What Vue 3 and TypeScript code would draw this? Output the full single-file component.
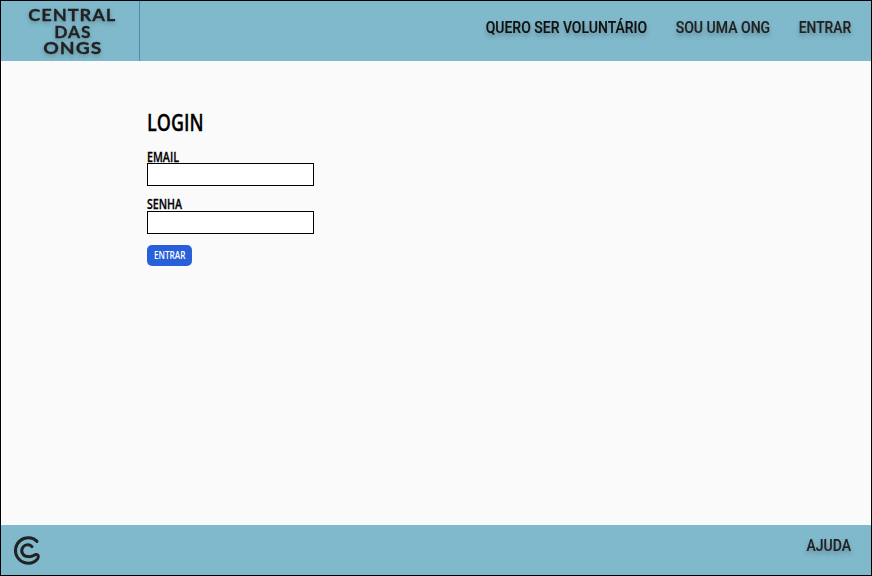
<script setup lang="ts">
interface Label {
  text: string
  width: number
}

const brand: Label[] = [
  { text: 'CENTRAL', width: 88 },
  { text: 'DAS', width: 37 },
  { text: 'ONGS', width: 59 },
]

const links: Label[] = [
  { text: 'QUERO SER VOLUNTÁRIO', width: 162 },
  { text: 'SOU UMA ONG', width: 95 },
  { text: 'ENTRAR', width: 53 },
]

const fields = [
  { id: 'email', text: 'EMAIL', type: 'email', width: 32 },
  { id: 'senha', text: 'SENHA', type: 'password', width: 35 },
]
</script>

<template>
  <div class="page">
    <header class="header">
      <a class="brand">
        <svg v-for="line in brand" :key="line.text" class="brand-line" :width="line.width" height="16.7">
          <text x="0.3" y="15" :textLength="line.width" lengthAdjust="spacingAndGlyphs">{{ line.text }}</text>
        </svg>
      </a>
      <nav class="nav">
        <a v-for="(link, i) in links" :key="link.text" class="link" :class="{ active: i === 0 }">
          <svg :width="link.width" height="20">
            <text x="0.7" y="16" :textLength="link.width - 0.5" lengthAdjust="spacingAndGlyphs">{{ link.text }}</text>
          </svg>
        </a>
      </nav>
    </header>

    <main class="main">
      <h1 class="title">
        <svg width="56" height="30">
          <text x="0" y="24" textLength="56.5" lengthAdjust="spacingAndGlyphs">LOGIN</text>
        </svg>
      </h1>
      <form class="form" @submit.prevent>
        <div v-for="field in fields" :key="field.id" class="field">
          <label :for="field.id">
            <svg :width="field.width" height="14">
              <text x="0" y="13" :textLength="field.width" lengthAdjust="spacingAndGlyphs">{{ field.text }}</text>
            </svg>
          </label>
          <input :id="field.id" :type="field.type" />
        </div>
        <button class="submit" type="submit">
          <svg width="32" height="13">
            <text x="0" y="10" textLength="31.5" lengthAdjust="spacingAndGlyphs">ENTRAR</text>
          </svg>
        </button>
      </form>
    </main>

    <footer class="footer">
      <svg class="mark" width="30" height="30" viewBox="0 0 30 30">
        <path d="M24 6.4A12.7 12.7 0 1 0 21 26.8C24.3 25 26 22.3 25.2 20.6C24.3 18.8 22.4 19.3 21 20.3C18.5 22 16.5 21.6 14.7 21.6A5.9 5.9 0 1 1 19 11.7" />
      </svg>
      <a class="link">
        <svg width="45" height="20">
          <text x="0.5" y="16" textLength="44.5" lengthAdjust="spacingAndGlyphs">AJUDA</text>
        </svg>
      </a>
    </footer>
  </div>
</template>

<style>
body {
  margin: 0;
}
</style>

<style scoped>
.page {
  box-sizing: border-box;
  width: 872px;
  height: 576px;
  border: 1px solid #000;
  background: #fafafa;
  display: flex;
  flex-direction: column;
  overflow: hidden;
}

svg {
  display: block;
  flex-shrink: 0;
  overflow: visible;
}

.header {
  display: flex;
  justify-content: space-between;
  height: 60px;
  background: #80b9cc;
}

.brand {
  box-sizing: border-box;
  width: 139px;
  padding: 5px 0 0 4px;
  border-right: 1px solid #4e8ca8;
  display: flex;
  flex-direction: column;
  align-items: center;
}

.brand-line {
  font: 700 17.8px Lato, sans-serif;
  letter-spacing: 0.9px;
  fill: #222;
  stroke: #222;
  stroke-width: 0.3px;
  filter: drop-shadow(0 2px 2px rgba(0, 0, 0, 0.25));
}

.nav {
  display: flex;
  gap: 28px;
  padding: 16px 20px 0 0;
}

.link {
  font: 500 16px Roboto, sans-serif;
  fill: #222;
  stroke: #222;
  stroke-width: 0.15px;
  filter: drop-shadow(0 3px 2px rgba(0, 0, 0, 0.25));
}

.link.active {
  fill: #111;
  stroke: #111;
}

.main {
  flex: 1;
  padding: 46px 0 0 146px;
  font-family: 'Open Sans', sans-serif;
  font-weight: 600;
}

.main h1 text,
.main label text {
  stroke: #000;
  stroke-width: 0.3px;
}

.title {
  margin: 0;
  font-size: 24px;
  font-weight: 600;
}

.form {
  display: flex;
  flex-direction: column;
  align-items: flex-start;
  padding-top: 12px;
}

.field {
  height: 48px;
  font-size: 14px;
}

.field:nth-child(2) text {
  transform: translateY(-1px);
}

.field input {
  display: block;
  box-sizing: border-box;
  width: 167px;
  height: 23px;
  margin: 0;
  padding: 0 6px;
  border: 1px solid #000;
  border-radius: 0;
  background: #fff;
}

.submit {
  width: 45px;
  height: 21px;
  margin: 0;
  padding: 0 0 0 7px;
  border: 0;
  border-radius: 5px;
  background: #2860d9;
  fill: #fff;
  font: 600 11px 'Open Sans', sans-serif;
}

.footer {
  display: flex;
  justify-content: space-between;
  height: 50px;
  padding: 0 20px 0 12px;
  background: #80b9cc;
}

.mark {
  margin-top: 10px;
  fill: none;
  stroke: #222;
  stroke-width: 3;
  stroke-linecap: round;
  stroke-linejoin: round;
}

.footer .link {
  padding-top: 10px;
}
</style>
